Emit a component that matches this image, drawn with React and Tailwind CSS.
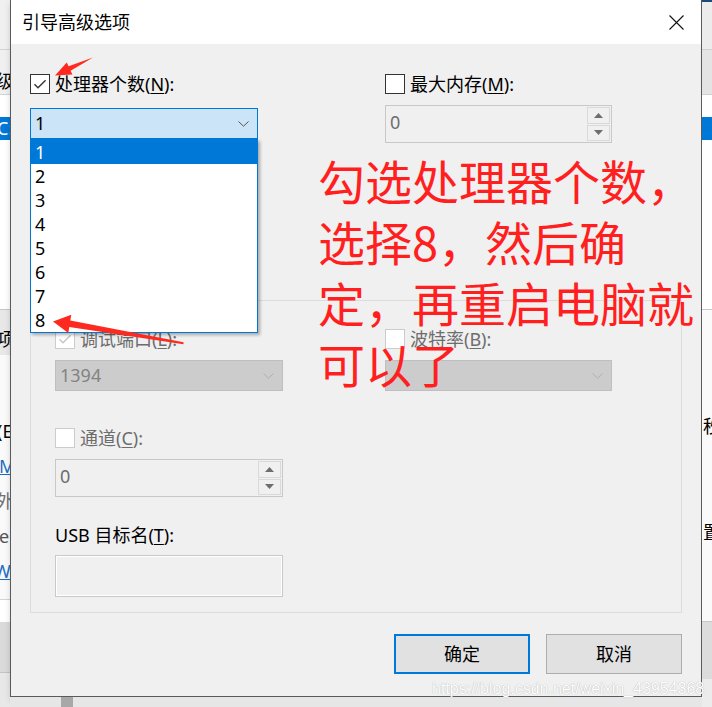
import React from 'react';

const ui = "font-['Noto_Sans','Noto_Sans_CJK_SC',sans-serif]";

function Check({ checked, disabled }) {
  return (
    <span
      className={`w-5 h-5 shrink-0 flex items-center justify-center border bg-white ${
        disabled ? 'border-[#cccccc]' : 'border-[#333333]'
      }`}
    >
      {checked && (
        <svg width="14" height="14" viewBox="0 0 14 14">
          <path d="M1.5 7.2 L5 10.8 L12.6 3.2" fill="none" stroke={disabled ? '#c6c6c6' : '#333333'} strokeWidth="1.4" />
        </svg>
      )}
    </span>
  );
}

function Label({ text, keyChar, rest, disabled }) {
  return (
    <span className={`text-[18px] leading-5 whitespace-nowrap ${disabled ? 'text-[#6d6d6d]' : 'text-black'}`}>
      {text}(<span className="underline underline-offset-2">{keyChar}</span>){rest}
    </span>
  );
}

function CheckRow({ checked, disabled, text, keyChar }) {
  return (
    <div className="flex items-center gap-[5px] h-5">
      <Check checked={checked} disabled={disabled} />
      <Label text={text} keyChar={keyChar} rest=":" disabled={disabled} />
    </div>
  );
}

function Chevron({ color }) {
  return (
    <svg width="11" height="6" viewBox="0 0 11 6">
      <path d="M0.5 0.5 L5.5 5.2 L10.5 0.5" fill="none" stroke={color} strokeWidth="1" />
    </svg>
  );
}

function Combo({ value, width, disabled }) {
  return (
    <div
      className={`h-[31px] flex items-center justify-between pl-[4px] pr-[8px] border ${width} ${
        disabled ? 'bg-[#cccccc] border-[#bfbfbf] text-[#838383]' : 'bg-[#cce4f7] border-[#0078d7] text-black'
      }`}
    >
      <span className="text-[18px]">{value}</span>
      <Chevron color={disabled ? '#b0b0b0' : '#555555'} />
    </div>
  );
}

function Spin({ width }) {
  return (
    <div className={`h-[38px] flex border border-[#c8c8c8] bg-[#f0f0f0] ${width}`}>
      <div className="flex-1 pl-[4px] pt-[3px] text-[18px] text-[#6d6d6d]">0</div>
      <div className="w-[25px] flex flex-col gap-px p-px">
        <div className="flex-1 flex items-center justify-center border border-[#d9d9d9]">
          <svg width="9" height="5" viewBox="0 0 9 5"><path d="M0 5 L4.5 0 L9 5 Z" fill="#6d6d6d" /></svg>
        </div>
        <div className="flex-1 flex items-center justify-center border border-[#d9d9d9]">
          <svg width="9" height="5" viewBox="0 0 9 5"><path d="M0 0 L4.5 5 L9 0 Z" fill="#6d6d6d" /></svg>
        </div>
      </div>
    </div>
  );
}

function LeftStrip() {
  return (
    <div className="w-[10px] shrink-0 flex flex-col overflow-hidden text-[18px] text-black">
      <div className="h-[50px] bg-[#f0f0f0] border-b border-[#d4d4d4]" />
      <div className="h-[45px] bg-[#f0f0f0] border-b border-[#d4d4d4] pt-[19px] -ml-[4px] whitespace-nowrap leading-6">级</div>
      <div className="h-[22px] bg-white" />
      <div className="h-[23px] bg-[#0078d7] text-white leading-[23px] -ml-[3px] whitespace-nowrap">C:</div>
      <div className="h-[170px] bg-white border-b border-[#c8c8c8]" />
      <div className="h-[45px] bg-[#e8e8e8] pt-[17px] -ml-[3px] whitespace-nowrap leading-6">项(</div>
      <div className="h-[245px] bg-[#fafafa] border-b border-[#d4d4d4] flex flex-col pt-[64px] gap-[11px] whitespace-nowrap leading-6">
        <span className="-ml-[3px]">(E</span>
        <span className="-ml-[1px] text-[#1a6fc4] underline">M</span>
        <span className="-ml-[4px] text-[#707070]">外</span>
        <span className="-ml-[1px] text-[#555]">e</span>
        <span className="-ml-[6px] text-[#1a6fc4] underline">W</span>
      </div>
      <div className="h-[22px] bg-white" />
      <div className="h-[51px] bg-[#dadada] border-b border-[#c4c4c4]" />
      <div className="flex-1 bg-[#e8e8e8]" />
    </div>
  );
}

function RightStrip() {
  return (
    <div className="flex-1 flex flex-col overflow-hidden text-[18px] text-black">
      <div className="h-[2px] bg-[#1e4a78]" />
      <div className="h-[48px] bg-[#ececec] border-b border-[#d0d0d0]" />
      <div className="h-[45px] bg-[#e4e4e4] border-b border-[#d0d0d0]" />
      <div className="h-[22px] bg-white" />
      <div className="h-[23px] bg-[#0078d7]" />
      <div className="h-[170px] bg-white border-b border-[#c8c8c8]" />
      <div className="h-[312px] bg-[#fafafa] border-b border-[#c8c8c8] flex flex-col pt-[104px] gap-[82px] whitespace-nowrap leading-6">
        <span className="ml-[1px]">秒</span>
        <span className="ml-[1px]">置</span>
      </div>
      <div className="h-[57px] bg-[#dcdcdc]" />
      <div className="flex-1 bg-[#ececec]" />
    </div>
  );
}

function Dialog() {
  return (
    <div className="w-[692px] shrink-0 flex flex-col">
      <div className="h-[697px] flex flex-col border-x border-b border-[#5a5a5a] shadow-[3px_3px_8px_rgba(0,0,0,0.35)]">
        <div className="h-[44px] bg-white flex items-center justify-between pl-[11px] pr-[17px]">
          <span className="text-[18px] text-black">引导高级选项</span>
          <svg width="15" height="15" viewBox="0 0 15 15">
            <path d="M0.5 0.5 L14.5 14.5 M14.5 0.5 L0.5 14.5" stroke="#111" strokeWidth="1.1" />
          </svg>
        </div>
        <div className="flex-1 bg-[#f0f0f0] flex flex-col px-[19px]">
          <div className="mt-[30px] flex">
            <div className="w-[355px] flex flex-col">
              <CheckRow checked text="处理器个数" keyChar="N" />
              <div className="mt-[14px]">
                <Combo value="1" width="w-[228px]" />
              </div>
            </div>
            <div className="flex flex-col">
              <CheckRow text="最大内存" keyChar="M" />
              <div className="mt-[11px]">
                <Spin width="w-[227px]" />
              </div>
            </div>
          </div>

          <div className="mt-[157px] h-[313px] border border-[#dcdcdc] flex flex-col pl-[24px] pt-[28px]">
            <div className="flex">
              <div className="w-[330px] flex flex-col">
                <CheckRow checked disabled text="调试端口" keyChar="L" />
                <div className="mt-[11px]">
                  <Combo value="1394" width="w-[228px]" disabled />
                </div>
              </div>
              <div className="flex flex-col">
                <CheckRow disabled text="波特率" keyChar="B" />
                <div className="mt-[11px]">
                  <Combo value="" width="w-[227px]" disabled />
                </div>
              </div>
            </div>
            <div className="mt-[37px]">
              <CheckRow disabled text="通道" keyChar="C" />
            </div>
            <div className="mt-[11px]">
              <Spin width="w-[228px]" />
            </div>
            <div className="mt-[26px] h-6 flex items-center">
              <span className="text-[18px] text-black whitespace-nowrap">
                USB 目标名(<span className="underline underline-offset-2">T</span>):
              </span>
            </div>
            <div className="mt-[8px] w-[228px] h-[42px] border border-[#c9c9c9] bg-[#f0f0f0]">
              <div className="w-full h-full border border-white" />
            </div>
          </div>

          <div className="mt-[21px] flex justify-end gap-4">
            <button className="w-[136px] h-[40px] border-2 border-[#0078d7] bg-[#e1e1e1] text-[18px] text-black">确定</button>
            <button className="w-[136px] h-[40px] border border-[#adadad] bg-[#e1e1e1] text-[18px] text-black">取消</button>
          </div>
        </div>
      </div>
      <div className="flex-1 bg-[#e6e6e6] flex">
        <div className="ml-[51px] w-[12px] bg-[#a8a8a8]" />
      </div>
    </div>
  );
}

function DropList() {
  const items = ['1', '2', '3', '4', '5', '6', '7', '8'];
  return (
    <div className="absolute left-[30px] top-[139px] w-[228px] h-[194px] border border-[#0078d7] bg-white shadow-[2px_2px_3px_rgba(0,0,0,0.3)]">
      {items.map((n, i) => (
        <div
          key={n}
          className={`h-6 pl-[4px] text-[18px] leading-6 ${i === 0 ? 'bg-[#0078d7] text-white' : 'text-black'}`}
        >
          {n}
        </div>
      ))}
    </div>
  );
}

export default function App() {
  return (
    <div className={`relative w-[712px] h-[707px] overflow-hidden flex bg-[#e8e8e8] ${ui}`}>
      <LeftStrip />
      <Dialog />
      <RightStrip />

      <DropList />

      <div className="absolute left-[318px] top-[149px] text-[47px] leading-[61px] text-[#ff1f1f] whitespace-nowrap font-['Noto_Sans_CJK_SC',sans-serif]">
        勾选处理器个数，<br />
        选择8，然后确<br />
        定，再重启电脑就<br />
        可以了
      </div>

      <svg className="absolute inset-0 pointer-events-none" width="712" height="707" viewBox="0 0 712 707">
        <polygon points="93,57.5 70.6,70.8 72.4,74.4 55,75.5 66.8,62.6 68.6,66.2" fill="#ff2a1f" />
        <polygon points="183.5,342.2 183.5,344.2 69.3,327 68.3,333 53,321.5 71.3,314.8 70.3,320.6" fill="#ff2a1f" />
      </svg>

      <div className="absolute left-[432px] top-[677px] text-[16px] leading-6 text-white whitespace-nowrap font-['Liberation_Sans',sans-serif] [text-shadow:0_0_1px_#9a9a9a]">
        https://blog.csdn.net/weixin_43954368
      </div>
    </div>
  );
}
